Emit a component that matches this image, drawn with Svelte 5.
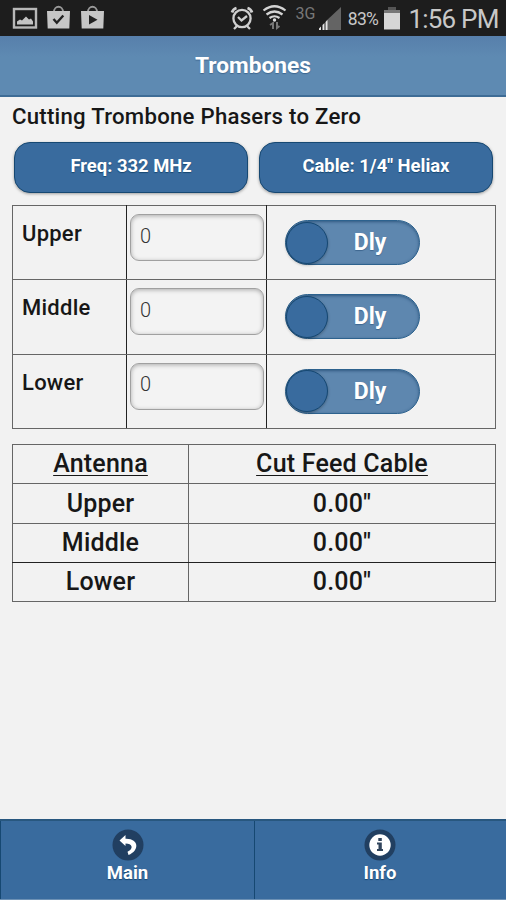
<script lang="ts">
	interface Phaser {
		name: string;
		value: string;
		cut: string;
	}

	let phasers = $state<Phaser[]>([
		{ name: 'Upper', value: '0', cut: '0.00"' },
		{ name: 'Middle', value: '0', cut: '0.00"' },
		{ name: 'Lower', value: '0', cut: '0.00"' }
	]);
</script>

<div class="screen">
	<div class="status-bar">
		<svg width="108" height="36" viewBox="0 0 108 36">
			<!-- gallery -->
			<rect x="14" y="9" width="22" height="18.5" fill="none" stroke="#b8b8b8" stroke-width="2.4" />
			<path d="M17 24.500v-3l3-2 2 1 4-4 3 3 2-1 2 3v3z" fill="#c4c4c4" />
			<!-- store updates -->
			<path d="M54 12c0-7 9-7 9 0M88 12c0-7 9-7 9 0" fill="none" stroke="#999" stroke-width="1.8" />
			<path d="M47 11h23l-.7 17.5H47.700zM81 11h23l-.7 17.5H81.700z" fill="#c6c6c6" />
			<path d="M53.500 19l3.300 3.800 6.500-7.300" fill="none" stroke="#222" stroke-width="2.4" />
			<path d="M89 15l8.500 4.800-8.500 4.800z" fill="#222" />
		</svg>
		<div class="status-right">
			<svg width="64" height="36" viewBox="230 0 64 36">
				<!-- alarm -->
				<g fill="none" stroke="#cfcfcf" stroke-width="2.3">
					<circle cx="242" cy="18.5" r="8.6" />
					<path d="M238 17l3.500 3.500 5.500-4.500M237 26l-3 3M247 26l3 3" />
					<path d="M232 12.500q1-3.500 4.500-4.500M252 12.500q-1-3.500-4.500-4.500" stroke-width="2.8" />
				</g>
				<!-- wifi -->
				<g fill="none" stroke="#d4d4d4" stroke-width="2.2">
					<path d="M263.500 10.500q11-8.500 22 0M266.500 14.500q8-6 16 0M269.500 18q5-3.500 10 0" />
				</g>
				<circle cx="274.500" cy="20" r="1.7" fill="#ddd" />
				<path d="M273 29v-6l-3 2M277 22v6l2.500-2" fill="none" stroke="#777" stroke-width="2" />
			</svg>
			<span class="network">3G</span>
			<svg width="26" height="36" viewBox="317 0 26 36">
				<path d="M341 7v23h-15V21z" fill="#646464" />
				<path d="M319 30v-1.500l2-2V30zM322.500 30v-5l2-2v7zM325.500 30v-8l2-2v10z" fill="#e4e4e4" />
			</svg>
			<span class="battery">83%</span>
			<svg class="battery-icon" width="18" height="36" viewBox="383 0 18 36">
				<path d="M388 7h8v3h-8z" fill="#555" />
				<path d="M384 10h16v3h-16z" fill="#777" />
				<path d="M384 13h16v16.500h-16z" fill="#d6d6d6" />
			</svg>
			<span class="clock">1:56 PM</span>
		</div>
	</div>

	<header>
		<h1>Trombones</h1>
	</header>

	<main>
		<h2>Cutting Trombone Phasers to Zero</h2>

		<div class="buttons">
			<button>Freq: 332 MHz</button>
			<button>Cable: 1/4" Heliax</button>
		</div>

		<table class="inputs">
			<colgroup>
				<col class="label-col" />
				<col class="value-col" />
				<col />
			</colgroup>
			<tbody>
				{#each phasers as phaser (phaser.name)}
					<tr>
						<td class="label">{phaser.name}</td>
						<td class="value">
							<input type="text" aria-label={phaser.name} bind:value={phaser.value} />
						</td>
						<td class="toggle">
							<div class="slider">
								<span class="knob"></span>
								<span class="slider-text">Dly</span>
							</div>
						</td>
					</tr>
				{/each}
			</tbody>
		</table>

		<table class="results">
			<colgroup>
				<col class="antenna-col" />
				<col />
			</colgroup>
			<tbody>
				<tr>
					<th>Antenna</th>
					<th>Cut Feed Cable</th>
				</tr>
				{#each phasers as phaser (phaser.name)}
					<tr>
						<td>{phaser.name}</td>
						<td>{phaser.cut}</td>
					</tr>
				{/each}
			</tbody>
		</table>
	</main>

	<footer>
		<div class="tab">
			<svg width="32" height="32" viewBox="0 0 32 32">
				<circle cx="16" cy="16" r="15.500" fill="#213f61" />
				<path d="M7.500 11.500l6-5.500v3.700c13.500-.5 14.500 11.800 3 16.300l-1-3.200c6.500-3 5-8.300-2-8.300V17z" fill="#fff" />
			</svg>
			<span>Main</span>
		</div>
		<div class="tab">
			<svg width="32" height="32" viewBox="0 0 32 32">
				<circle cx="16" cy="16" r="15.500" fill="#213f61" />
				<circle cx="16" cy="16" r="10.700" fill="#fff" />
				<path d="M14.300 9h3.500v3h-3.500zM13 13.500h4.800V20H19v2h-6v-2h1.500v-4.500H13z" fill="#30445c" />
			</svg>
			<span>Info</span>
		</div>
	</footer>
</div>

<style>
	:global(body) {
		background: #f2f2f2;
	}

	.screen {
		width: 506px;
		height: 900px;
		display: flex;
		flex-direction: column;
		overflow: hidden;
		background: #f2f2f2;
		color: #171717;
		font-family: Roboto, sans-serif;
	}

	.status-bar {
		height: 36px;
		flex: none;
		display: flex;
		justify-content: space-between;
		background: #1d1d1d;
	}

	.status-right {
		display: flex;
		line-height: 38px;
		color: #c8c8c8;
		white-space: nowrap;
	}

	.network {
		width: 23px;
		text-align: center;
		font-size: 16px;
		line-height: 28px;
		color: #777;
	}

	.battery {
		width: 40px;
		text-align: center;
		font-size: 17.500px;
		letter-spacing: -0.6px;
	}

	.clock {
		width: 105px;
		text-align: center;
		font-size: 26px;
		letter-spacing: -0.8px;
	}

	header {
		height: 61px;
		box-sizing: border-box;
		flex: none;
		background: linear-gradient(#577fab, #5e8ab2 35%);
		border-bottom: 2px solid #3e6c96;
		text-align: center;
	}

	h1 {
		margin: 0;
		font-size: 22.700px;
		font-weight: 700;
		line-height: 60px;
		color: #fff;
		text-shadow: 0 1px 1px #3e6790;
	}

	main {
		flex: 1;
		padding: 0 10px 0 12px;
	}

	h2 {
		margin: 0;
		font-size: 22.200px;
		font-weight: 500;
		line-height: 39px;
		white-space: nowrap;
		letter-spacing: 0.25px;
	}

	.buttons {
		display: grid;
		grid-template-columns: 234px 234px;
		gap: 11px;
		margin: 6px 0 12px 2px;
	}

	button {
		height: 51px;
		padding: 0 0 4px;
		border: 1px solid #164872;
		border-radius: 16px;
		background: #396b9e;
		box-shadow: 0 1px 3px rgba(0, 0, 0, 0.35);
		color: #fff;
		font-family: inherit;
		font-size: 18.400px;
		font-weight: 700;
		text-shadow: 0 1px 1px #164872;
	}

	table {
		width: 484px;
		table-layout: fixed;
		border-collapse: collapse;
	}

	td,
	th {
		padding: 0;
		border: 1px solid #666;
	}

	.label-col {
		width: 114px;
	}

	.value-col {
		width: 140px;
	}

	.antenna-col {
		width: 176px;
	}

	.inputs td {
		height: 73.400px;
		vertical-align: top;
	}

	.inputs .label {
		padding: 14px 0 0 9px;
		height: 59.400px;
		border-right-color: #222;
		font-size: 22px;
		font-weight: 500;
		line-height: 28px;
		letter-spacing: 0.25px;
	}

	.inputs .value {
		border-right-color: #222;
	}

	input {
		display: block;
		box-sizing: border-box;
		width: 134px;
		height: 47px;
		margin: 8px 0 0 3px;
		padding: 0 9px 4px;
		border: 1px solid #a0a0a0;
		border-radius: 9px;
		background: #f3f3f3;
		box-shadow: inset 0 1px 4px rgba(0, 0, 0, 0.3);
		color: #333;
		font-family: inherit;
		font-size: 20px;
		font-weight: 300;
	}

	.slider {
		display: flex;
		align-items: center;
		box-sizing: border-box;
		width: 135px;
		height: 45px;
		margin: 14px 0 0 18px;
		border: 1px solid #2d628e;
		border-radius: 23px;
		background: #5e87af;
		box-shadow: inset 0 1px 3px rgba(20, 60, 100, 0.6);
	}

	.knob {
		box-sizing: border-box;
		width: 42px;
		height: 42px;
		border: 1px solid #154873;
		border-radius: 50%;
		background: #396b9e;
		box-shadow: 0 1px 3px rgba(0, 0, 0, 0.3);
	}

	.slider-text {
		width: 84px;
		text-align: center;
		color: #fff;
		font-size: 23px;
		font-weight: 700;
		line-height: 43px;
		text-shadow: 0 1px 1px #3e6790;
	}

	.results {
		margin-top: 15px;
	}

	.results td,
	.results th {
		height: 38.250px;
		text-align: center;
		font-size: 25px;
		font-weight: 500;
		line-height: 36px;
		letter-spacing: 0.2px;
	}

	.results th {
		text-decoration: underline;
		text-decoration-thickness: 1px;
		text-underline-offset: 3px;
	}

	.results tr:nth-child(3) td {
		border-bottom-color: #222;
	}

	footer {
		display: grid;
		grid-template-columns: 254px 1fr;
		height: 81px;
		box-sizing: border-box;
		flex: none;
		border-top: 2px solid #28577f;
		border-bottom: 1px solid #6d91b5;
		background: #396b9e;
	}

	.tab {
		display: flex;
		flex-direction: column;
		align-items: center;
		box-sizing: border-box;
		padding-top: 8px;
		border-left: 1px solid #164872;
		color: #fff;
		font-size: 18.500px;
		font-weight: 700;
		line-height: 24px;
		text-shadow: 0 1px 1px #164872;
	}

	.tab:last-child {
		padding-right: 1px;
	}
</style>
